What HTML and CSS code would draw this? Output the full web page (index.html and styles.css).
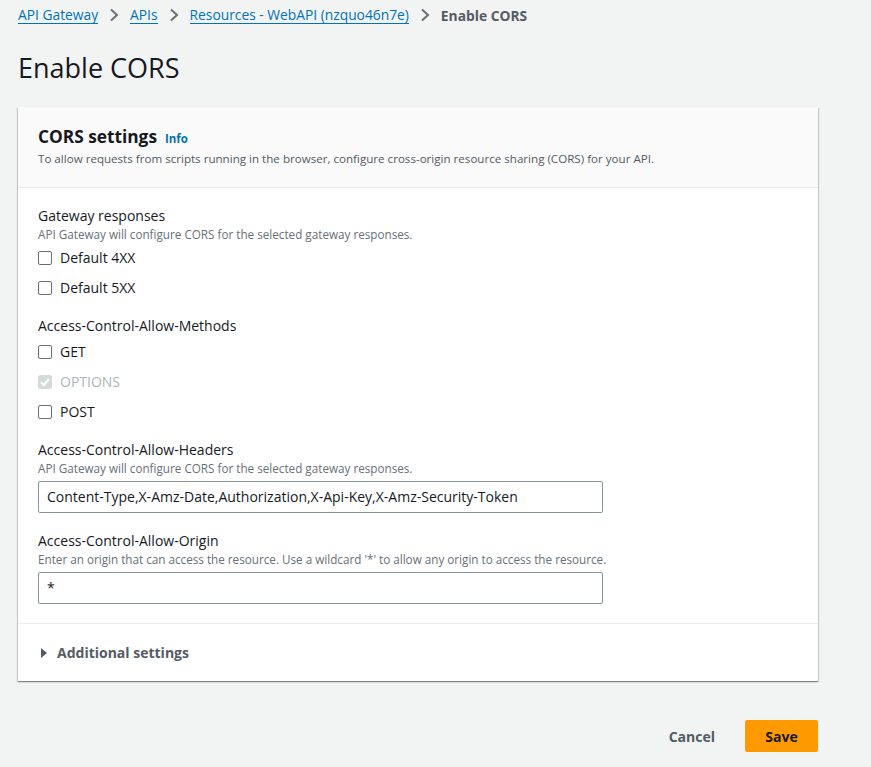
FILE: index.html
```html
<!DOCTYPE html>
<html>
<head>
<meta charset="utf-8">
<link rel="stylesheet" href="styles.css">
</head>
<body>
<nav class="crumbs">
  <a href="#">API Gateway</a>
  <span class="sep"><svg width="10" height="14" viewBox="0 0 10 14"><path d="M2 1.5 L8 7 L2 12.5" fill="none" stroke="#687078" stroke-width="2"/></svg></span>
  <a href="#">APIs</a>
  <span class="sep"><svg width="10" height="14" viewBox="0 0 10 14"><path d="M2 1.5 L8 7 L2 12.5" fill="none" stroke="#687078" stroke-width="2"/></svg></span>
  <a href="#">Resources - WebAPI (nzquo46n7e)</a>
  <span class="sep"><svg width="10" height="14" viewBox="0 0 10 14"><path d="M2 1.5 L8 7 L2 12.5" fill="none" stroke="#687078" stroke-width="2"/></svg></span>
  <span class="current">Enable CORS</span>
</nav>
<h1 class="title">Enable CORS</h1>
<section class="card">
  <header class="card-head">
    <div class="card-title"><h2>CORS settings</h2><a class="info" href="#">Info</a></div>
    <p class="card-desc">To allow requests from scripts running in the browser, configure cross-origin resource sharing (CORS) for your API.</p>
  </header>
  <div class="card-body">
    <div class="field">
      <div class="label">Gateway responses</div>
      <div class="hint">API Gateway will configure CORS for the selected gateway responses.</div>
      <div class="checks">
        <label class="check"><span class="box"></span>Default 4XX</label>
        <label class="check"><span class="box"></span>Default 5XX</label>
      </div>
    </div>
    <div class="field">
      <div class="label">Access-Control-Allow-Methods</div>
      <div class="checks">
        <label class="check"><span class="box"></span>GET</label>
        <label class="check disabled"><span class="box checked"><svg width="14" height="14" viewBox="0 0 14 14"><path d="M3 7.2 L5.8 10 L11 4" fill="none" stroke="#fff" stroke-width="2"/></svg></span>OPTIONS</label>
        <label class="check"><span class="box"></span>POST</label>
      </div>
    </div>
    <div class="field">
      <div class="label">Access-Control-Allow-Headers</div>
      <div class="hint">API Gateway will configure CORS for the selected gateway responses.</div>
      <div class="input">Content-Type,X-Amz-Date,Authorization,X-Api-Key,X-Amz-Security-Token</div>
    </div>
    <div class="field">
      <div class="label">Access-Control-Allow-Origin</div>
      <div class="hint">Enter an origin that can access the resource. Use a wildcard '*' to allow any origin to access the resource.</div>
      <div class="input">*</div>
    </div>
  </div>
  <div class="card-foot">
    <svg width="8" height="10" viewBox="0 0 8 10"><path d="M1 0 L7 5 L1 10 Z" fill="#545b64"/></svg>
    <span>Additional settings</span>
  </div>
</section>
<div class="actions">
  <button class="btn-link">Cancel</button>
  <button class="btn-primary">Save</button>
</div>
</body>
</html>
```
FILE: styles.css
```css
html, body {
  margin: 0;
  padding: 0;
}
body {
  background: #f2f3f3;
  font-family: "Open Sans", "Liberation Sans", sans-serif;
  color: #16191f;
  width: 871px;
  height: 767px;
  overflow: hidden;
}
.crumbs {
  display: flex;
  align-items: center;
  padding: 4px 18px 0;
  height: 22px;
  font-size: 13.8px;
  gap: 11px;
}
.crumbs a {
  color: #0073bb;
  text-decoration: none;
  border-bottom: 1px solid #0073bb;
  line-height: 17px;
}
.sep {
  display: flex;
  align-items: center;
}
.crumbs .current {
  color: #545b64;
  font-weight: 700;
}
.title {
  margin: 25px 0 0 18px;
  font-size: 27px;
  font-weight: 400;
  line-height: 34px;
  height: 34px;
}
.card {
  margin: 22px 0 0 18px;
  width: 800px;
  background: #fff;
  box-shadow: 0 1px 1px 0 rgba(0,28,36,0.3), 1px 1px 1px 0 rgba(0,28,36,0.15), -1px 1px 1px 0 rgba(0,28,36,0.15);
}
.card-head {
  background: #fafafa;
  border-bottom: 1px solid #eaeded;
  padding: 18px 20px 20px;
  height: 42px;
}
.card-title {
  display: flex;
  align-items: baseline;
  gap: 8px;
}
.card-title h2 {
  margin: 0;
  font-size: 17.3px;
  font-weight: 700;
  line-height: 24px;
}
.info {
  color: #0073bb;
  font-size: 11.5px;
  font-weight: 700;
  text-decoration: none;
}
.card-desc {
  margin: 2px 0 0;
  font-size: 11.6px;
  color: #545b64;
  line-height: 16px;
}
.card-body {
  padding: 18px 20px 19px;
  border-bottom: 1px solid #eaeded;
  display: flex;
  flex-direction: column;
  gap: 18px;
}
.label {
  font-size: 14px;
  line-height: 20px;
}
.hint {
  font-size: 11.7px;
  color: #687078;
  line-height: 16px;
}
.checks {
  display: flex;
  flex-direction: column;
  gap: 10px;
  margin-top: 6px;
}
.check {
  display: flex;
  align-items: center;
  gap: 8px;
  font-size: 14px;
  line-height: 20px;
}
.box {
  width: 12px;
  height: 12px;
  border: 1px solid #687078;
  border-radius: 2px;
  background: #fff;
  position: relative;
}
.box.checked {
  background: #d5dbdb;
  border-color: #d5dbdb;
}
.box svg {
  position: absolute;
  left: -1px;
  top: -1px;
}
.check.disabled {
  color: #aab7b8;
}
.input {
  margin-top: 5px;
  height: 30px;
  border: 1px solid #879596;
  border-radius: 2px;
  box-sizing: content-box;
  font-size: 14px;
  line-height: 30px;
  padding: 0 0 0 8px;
  width: 555px;
}
.card-foot {
  display: flex;
  align-items: center;
  gap: 9px;
  height: 57px;
  padding: 0 20px 0 22px;
  font-size: 14px;
  font-weight: 700;
  color: #545b64;
}
.actions {
  display: flex;
  justify-content: flex-end;
  align-items: center;
  width: 800px;
  margin: 39px 0 0 18px;
  gap: 10px;
}
.btn-link, .btn-primary {
  font-family: inherit;
  font-size: 14px;
  font-weight: 700;
  border: none;
  border-radius: 2px;
  height: 32px;
  padding: 0 20px;
  cursor: pointer;
}
.btn-link {
  background: transparent;
  color: #545b64;
}
.btn-primary {
  background: #ff9900;
  color: #16191f;
  width: 73px;
}
```
